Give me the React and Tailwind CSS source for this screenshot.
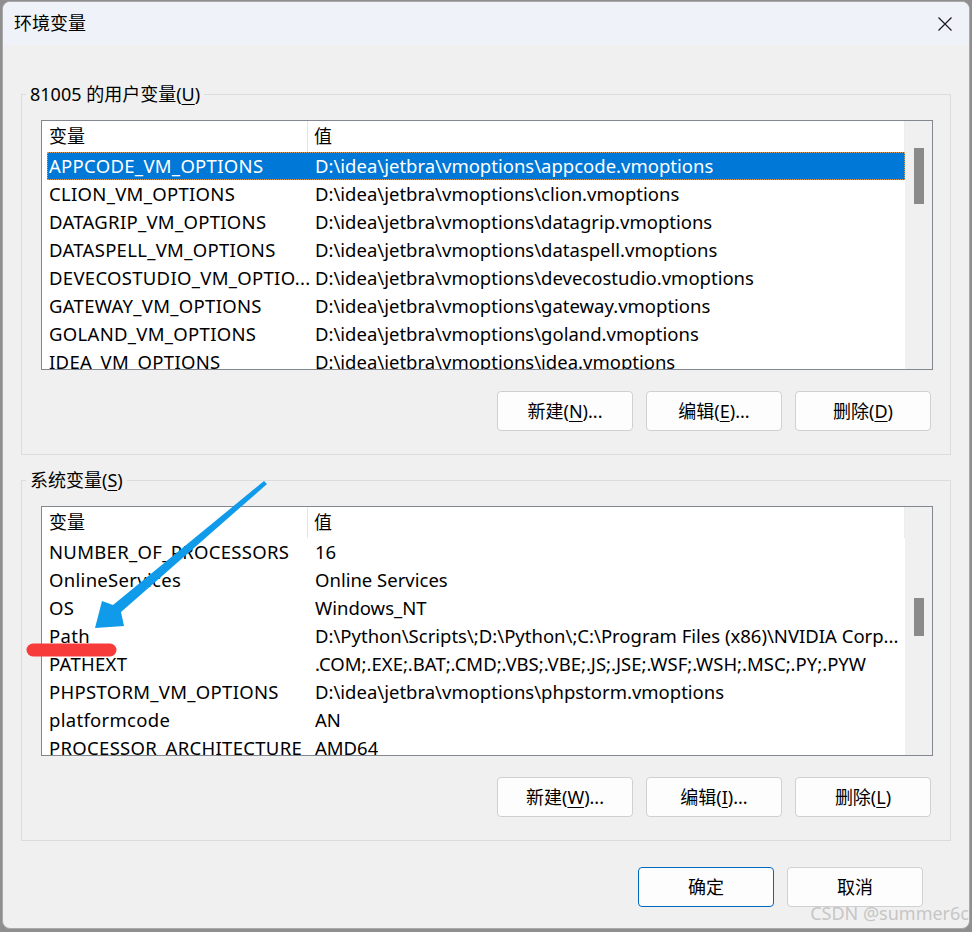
import React from 'react'

const USER_VARS = [
  ['APPCODE_VM_OPTIONS', 'D:\\idea\\jetbra\\vmoptions\\appcode.vmoptions'],
  ['CLION_VM_OPTIONS', 'D:\\idea\\jetbra\\vmoptions\\clion.vmoptions'],
  ['DATAGRIP_VM_OPTIONS', 'D:\\idea\\jetbra\\vmoptions\\datagrip.vmoptions'],
  ['DATASPELL_VM_OPTIONS', 'D:\\idea\\jetbra\\vmoptions\\dataspell.vmoptions'],
  ['DEVECOSTUDIO_VM_OPTIO...', 'D:\\idea\\jetbra\\vmoptions\\devecostudio.vmoptions'],
  ['GATEWAY_VM_OPTIONS', 'D:\\idea\\jetbra\\vmoptions\\gateway.vmoptions'],
  ['GOLAND_VM_OPTIONS', 'D:\\idea\\jetbra\\vmoptions\\goland.vmoptions'],
  ['IDEA_VM_OPTIONS', 'D:\\idea\\jetbra\\vmoptions\\idea.vmoptions'],
]

const SYS_VARS = [
  ['NUMBER_OF_PROCESSORS', '16'],
  ['OnlineServices', 'Online Services'],
  ['OS', 'Windows_NT'],
  ['Path', 'D:\\Python\\Scripts\\;D:\\Python\\;C:\\Program Files (x86)\\NVIDIA Corp...'],
  ['PATHEXT', '.COM;.EXE;.BAT;.CMD;.VBS;.VBE;.JS;.JSE;.WSF;.WSH;.MSC;.PY;.PYW'],
  ['PHPSTORM_VM_OPTIONS', 'D:\\idea\\jetbra\\vmoptions\\phpstorm.vmoptions'],
  ['platformcode', 'AN'],
  ['PROCESSOR_ARCHITECTURE', 'AMD64'],
]

function VarList({ rows, selected, thumb }) {
  return (
    <div className="flex h-[250px] overflow-hidden border border-[#828790] bg-white">
      <div className="min-w-0 flex-1 overflow-hidden">
        <div className="flex h-[31px] items-center border-r border-[#ececec]">
          <div className="flex h-full w-[266px] items-center border-r border-[#e5e5e5] pl-[7px]">变量</div>
          <div className="pl-[6px]">值</div>
        </div>
        {rows.map(([name, value], i) => (
          <div
            key={name}
            className={
              i === selected
                ? 'ml-[5px] flex h-[28px] items-center bg-[#0078d7] text-[18.5px] text-white outline-1 -outline-offset-1 outline-dotted outline-[#d9a066]'
                : 'ml-[5px] flex h-[28px] items-center text-[18.5px]'
            }
          >
            <div className="w-[266px] shrink-0 overflow-hidden whitespace-nowrap pl-[2px] tracking-[0.3px]">{name}</div>
            <div className="overflow-hidden whitespace-nowrap pl-[2px]">{value}</div>
          </div>
        ))}
      </div>
      <div className="flex w-[27px] shrink-0 flex-col items-center bg-[#f0f0f0]">
        <div className={thumb} />
      </div>
    </div>
  )
}

function Btn({ pre, hot, post, primary }) {
  return (
    <button
      className={
        primary
          ? 'h-[40px] w-[136px] rounded-[4px] border border-[#0067c0] bg-[#fdfdfd]'
          : 'h-[40px] w-[136px] rounded-[4px] border border-[#d0d0d0] bg-[#fdfdfd]'
      }
    >
      {pre}
      {hot && <span className="underline underline-offset-[3px]">{hot}</span>}
      {post}
    </button>
  )
}

function Group({ title, hot, children }) {
  return (
    <fieldset className="w-[930px] border border-[#dcdcdc]">
      <legend className="ml-[4px] px-[4px] leading-[24px]">
        {title}(<span className="underline underline-offset-[3px]">{hot}</span>)
      </legend>
      <div className="pl-[19px] pr-[17px] pt-[14px] pb-[23px]">{children}</div>
    </fieldset>
  )
}

export default function App() {
  return (
    <div className="relative h-[932px] w-[972px] overflow-hidden bg-[#8f8f8f] pl-[2px] pt-px font-['Segoe_UI','Noto_Sans','Noto_Sans_CJK_SC',sans-serif] text-[18px] text-black">
      <div className="h-[928px] w-[968px] overflow-hidden rounded-lg border border-[#a9a9a9] bg-[#f0f0f0]">
        {/* Title bar */}
        <div className="flex h-[43px] items-center justify-between bg-[#eff3f9] pl-[11px] pr-[16px]">
          <span>环境变量</span>
          <svg width="16" height="16" viewBox="0 0 16 16" fill="none" stroke="#1a1a1a" strokeWidth="1.2">
            <path d="M1.5 1.5 L14.5 14.5 M14.5 1.5 L1.5 14.5" />
          </svg>
        </div>

        <div className="pl-[18px] pt-[37px]">
          <Group title="81005 的用户变量" hot="U">
            <VarList rows={USER_VARS} selected={0} thumb="mt-[27px] h-[56px] w-[10px] bg-[#8a8a8a]" />
            <div className="mt-[21px] flex justify-end gap-[13px] pr-[2px]">
              <Btn pre="新建(" hot="N" post=")..." />
              <Btn pre="编辑(" hot="E" post=")..." />
              <Btn pre="删除(" hot="D" post=")" />
            </div>
          </Group>

          <div className="mt-[13px]">
            <Group title="系统变量" hot="S">
              <VarList rows={SYS_VARS} selected={-1} thumb="mt-[91px] h-[38px] w-[10px] bg-[#8a8a8a]" />
              <div className="mt-[21px] flex justify-end gap-[13px] pr-[2px]">
                <Btn pre="新建(" hot="W" post=")..." />
                <Btn pre="编辑(" hot="I" post=")..." />
                <Btn pre="删除(" hot="L" post=")" />
              </div>
            </Group>
          </div>

          <div className="mt-[26px] flex justify-end gap-[13px] pr-[46px]">
            <Btn pre="确定" primary />
            <Btn pre="取消" />
          </div>
        </div>
      </div>

      {/* annotation drawn over the screenshot */}
      <svg className="pointer-events-none absolute left-0 top-0" width="972" height="932">
        <polygon
          points="264,481 267,484 121,612 124,626 95,628 102,601 113,605"
          fill="#0f9aea"
        />
        <line x1="33" y1="650" x2="110" y2="650" stroke="#f73b3b" strokeWidth="13" strokeLinecap="round" />
      </svg>
      <div className="absolute bottom-[5px] right-[3px] text-[18px] text-[#c6c6c6]">CSDN @summer6c</div>
    </div>
  )
}
